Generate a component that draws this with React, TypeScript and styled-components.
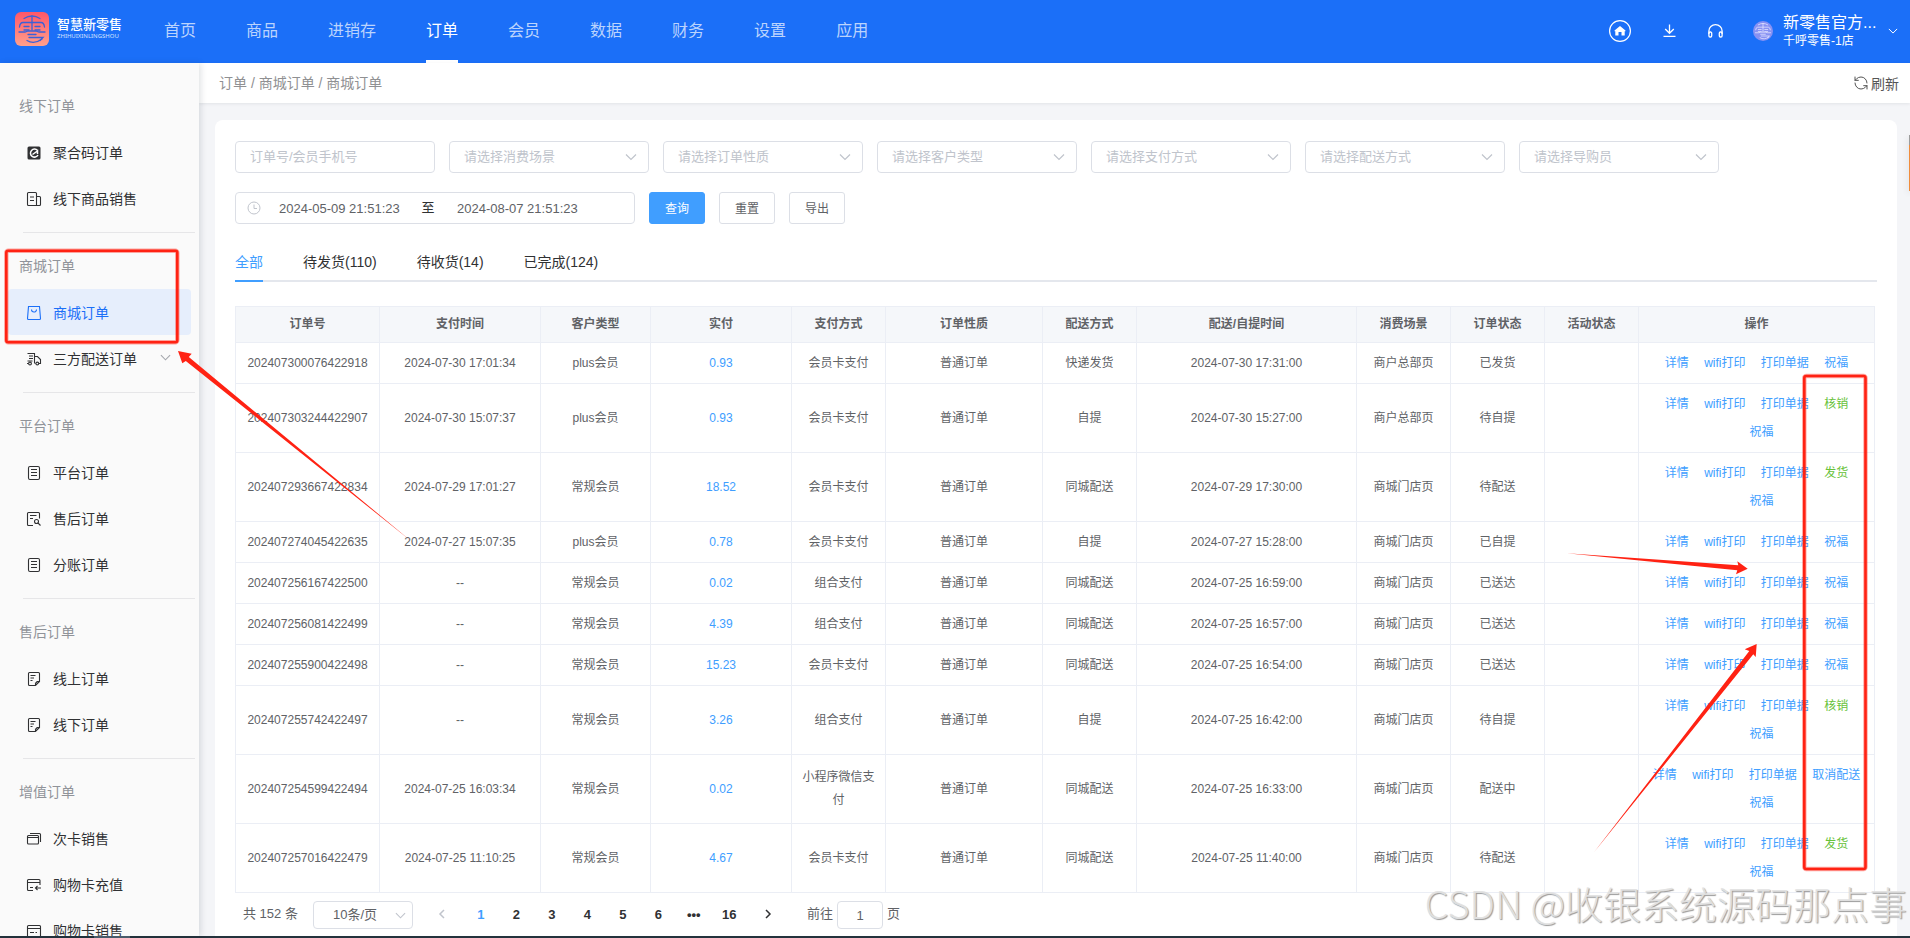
import React from 'react';
import styled, { createGlobalStyle, css } from 'styled-components';
import { RefreshCcw } from 'lucide-react';

const GlobalStyle = createGlobalStyle`
  *, *::before, *::after { box-sizing: border-box; }
  body {
    margin: 0;
    font-family: "Liberation Sans", "Noto Sans CJK SC", sans-serif;
    font-size: 14px;
    color: #303133;
  }
  button, input, select { font-family: inherit; margin: 0; }
  a { color: inherit; text-decoration: none; }
  ul { list-style: none; margin: 0; padding: 0; }
`;

/* ---------- shell ---------- */

const Shell = styled.div`
  position: relative;
  display: flex;
  flex-direction: column;
  height: 100vh;
  overflow: hidden;
  background: #f4f5f8;
`;

const Body = styled.div`
  display: flex;
  flex: 1;
  min-height: 0;
`;

const BottomStrip = styled.footer`
  flex: none;
  height: 2px;
  background: linear-gradient(90deg, #24333d 94px, #4d5f6e 94px 130px, #24333d 130px);
`;

/* ---------- header ---------- */

const Header = styled.header`
  flex: none;
  display: flex;
  align-items: center;
  height: 63px;
  padding: 0 12px 0 15px;
  background: #1b6ff8;
  color: #fff;
`;

const Brand = styled.a`
  display: flex;
  align-items: center;
  gap: 8px;
  width: 149px;
  margin-bottom: 5px;
`;

const BrandText = styled.div`
  display: flex;
  flex-direction: column;
`;

const BrandName = styled.span`
  font-size: 13px;
  font-weight: 500;
  line-height: 14px;
`;

const BrandSub = styled.span`
  font-family: "Noto Sans", sans-serif;
  font-size: 6px;
  line-height: 8px;
  color: #d3e2fe;
`;

const TopNav = styled.nav`
  display: flex;
  align-self: stretch;
  gap: 50px;
  flex: 1;
`;

const TopLink = styled.a<{ $active?: boolean }>`
  padding-top: 1px;
  border-bottom: 3px solid ${(p) => (p.$active ? '#fff' : 'transparent')};
  font-size: 16px;
  line-height: 59px;
  color: ${(p) => (p.$active ? '#fff' : '#bbd4fd')};
`;

const Tools = styled.div`
  display: flex;
  align-items: center;
  padding-bottom: 2px;
`;

const IconButton = styled.button<{ $gap?: number }>`
  display: flex;
  padding: 0;
  margin-right: ${(p) => p.$gap ?? 0}px;
  border: 0;
  background: none;
  color: #fff;
`;

const Account = styled.div`
  width: 100px;
  margin: 0 5px 0 10px;
  white-space: nowrap;
`;

const AccountName = styled.div`
  font-size: 16px;
  line-height: 20px;
`;

const AccountShop = styled.div`
  font-size: 12px;
  line-height: 16px;
`;

/* ---------- sidebar ---------- */

const SideWrap = styled.div`
  position: relative;
  z-index: 2;
  display: flex;
  flex: none;
  box-shadow: 2px 0 6px rgba(0, 21, 41, 0.12);
`;

const Sidebar = styled.aside`
  flex: none;
  width: 199px;
  padding-top: 20px;
  overflow: hidden;
  background: #fafafa;
`;

const Group = styled.section`
  & + & {
    padding-top: 11px;
  }
  & + &::before {
    content: '';
    display: block;
    height: 1px;
    margin: 0 4px 10px 23px;
    background: #e6e6e8;
  }
`;

const GroupTitle = styled.h2`
  margin: 0;
  padding-left: 19px;
  font-size: 14px;
  font-weight: 400;
  line-height: 46px;
  color: #909399;
`;

const SideLink = styled.a<{ $active?: boolean }>`
  display: flex;
  align-items: center;
  height: 46px;
  margin: 0 8px;
  padding: 0 20px 0 18px;
  border-radius: 4px;
  font-size: 14px;
  color: ${(p) => (p.$active ? '#1b6ff8' : '#303133')};
  background: ${(p) => (p.$active ? '#e6eefc' : 'transparent')};
`;

const SideGlyph = styled.svg`
  flex: none;
  margin-top: 2px;
`;

const SideLabel = styled.span`
  flex: 1;
  margin-left: 11px;
  white-space: nowrap;
`;

const SideChevron = styled.span`
  display: flex;
  margin-bottom: 2px;
  color: #a4a7ad;
`;

/* ---------- main ---------- */

const Main = styled.main`
  display: flex;
  flex-direction: column;
  flex: 1;
  min-width: 0;
`;

const CrumbBar = styled.div`
  flex: none;
  display: flex;
  align-items: center;
  justify-content: space-between;
  height: 40px;
  padding: 0 11px 0 20px;
  background: #fff;
  box-shadow: 0 1px 3px rgba(0, 21, 41, 0.08);
  color: #8f9092;
`;

const Crumbs = styled.nav`
  padding-bottom: 2px;
`;

const RefreshButton = styled.button`
  display: flex;
  align-items: center;
  gap: 2px;
  padding: 0;
  border: 0;
  background: none;
  font-size: 14px;
  color: #555;
`;

const Card = styled.section`
  flex: 1;
  min-height: 0;
  margin: 17px 13px 0 16px;
  padding: 21px 20px 0;
  border-radius: 8px 8px 0 0;
  background: #fff;
  overflow: hidden;
`;

const FilterRow = styled.div`
  display: flex;
  gap: 14px;
  margin-bottom: 19px;
`;

const fieldBox = css`
  border: 1px solid #dcdfe6;
  border-radius: 4px;
  background: #fff;
`;

const TextField = styled.input`
  ${fieldBox}
  width: 200px;
  height: 32px;
  padding: 0 14px 2px;
  font-size: 13px;
  color: #606266;
  &::placeholder { color: #c0c4cc; opacity: 1; }
`;

const SelectBox = styled.div<{ $small?: boolean }>`
  ${fieldBox}
  position: relative;
  display: flex;
  align-items: center;
  width: ${(p) => (p.$small ? 100 : 200)}px;
  height: ${(p) => (p.$small ? 28 : 32)}px;
  color: #c0c4cc;
  svg {
    position: absolute;
    right: ${(p) => (p.$small ? 6 : 11)}px;
    pointer-events: none;
  }
`;

const NativeSelect = styled.select<{ $small?: boolean }>`
  appearance: none;
  width: 100%;
  height: 100%;
  padding: ${(p) => (p.$small ? '0 19px 2px' : '0 30px 2px 14px')};
  border: 0;
  background: none;
  font-size: 13px;
  color: ${(p) => (p.$small ? '#606266' : '#c0c4cc')};
`;

const DateRange = styled.div`
  ${fieldBox}
  display: flex;
  align-items: center;
  width: 400px;
  height: 32px;
  padding-left: 11px;
  font-size: 13px;
`;

const DateInput = styled.input`
  width: 156px;
  padding: 0 0 0 18px;
  border: 0;
  background: none;
  font-size: 13px;
  color: #606266;
`;

const DateSeparator = styled.span`
  width: 22px;
  text-align: center;
  line-height: 24px;
`;

const Button = styled.button<{ $primary?: boolean }>`
  height: 32px;
  padding: 0 15px 2px;
  border: 1px solid ${(p) => (p.$primary ? '#409eff' : '#dcdfe6')};
  border-radius: 3px;
  background: ${(p) => (p.$primary ? '#409eff' : '#fff')};
  color: ${(p) => (p.$primary ? '#fff' : '#606266')};
  font-size: 12px;
`;

const Tabs = styled.div`
  display: flex;
  gap: 40px;
  margin: 20px 0 24px;
  height: 38px;
  border-bottom: 2px solid #e4e7ed;
`;

const Tab = styled.button<{ $active?: boolean }>`
  height: 38px;
  padding: 0;
  border: 0;
  border-bottom: 2px solid ${(p) => (p.$active ? '#409eff' : 'transparent')};
  background: none;
  font-size: 14px;
  line-height: 36px;
  color: ${(p) => (p.$active ? '#409eff' : '#303133')};
`;

const TableFrame = styled.div`
  padding-right: 2px;
`;

const Table = styled.table`
  width: 100%;
  table-layout: fixed;
  border-collapse: separate;
  border-spacing: 0;
  border-top: 1px solid #ebeef5;
  border-left: 1px solid #ebeef5;
  font-size: 12px;
  line-height: 23px;
  color: #606266;
  text-align: center;
`;

const Th = styled.th`
  padding: 6px 10px;
  border-right: 1px solid #ebeef5;
  border-bottom: 1px solid #ebeef5;
  background: #f5f7fa;
`;

const Td = styled.td<{ $tone?: 'amount' }>`
  padding: 6px 10px;
  border-right: 1px solid #ebeef5;
  border-bottom: 1px solid #ebeef5;
  color: ${(p) => (p.$tone ? '#409eff' : 'inherit')};
`;

const Actions = styled.div`
  line-height: 28px;
`;

const Action = styled.button<{ $tone?: 'green' }>`
  padding: 0;
  border: 1px solid transparent;
  background: none;
  font-size: 12px;
  line-height: 26px;
  color: ${(p) => (p.$tone ? '#67c23a' : '#409eff')};
  & + & { margin-left: 10px; }
`;

const Pagination = styled.div`
  display: flex;
  align-items: center;
  height: 28px;
  margin-top: 8px;
  padding-left: 8px;
  font-size: 13px;
  line-height: 26px;
  color: #606266;
`;

const PageText = styled.span`
  padding-bottom: 2px;
`;

const Total = styled(PageText)`
  width: 70px;
`;

const PageArrow = styled.button<{ $dim?: boolean }>`
  display: flex;
  align-items: center;
  justify-content: center;
  width: 38px;
  height: 28px;
  padding: 0 0 2px;
  border: 0;
  background: none;
  color: ${(p) => (p.$dim ? '#c0c4cc' : '#303133')};
`;

const PrevSlot = styled.div`
  margin-left: 10px;
`;

const Pager = styled.ul`
  display: flex;
  width: 284px;
  margin: 0 2px;
  li { flex: 1; }
`;

const PageNumber = styled.button<{ $active?: boolean }>`
  width: 100%;
  height: 28px;
  padding: 0 0 2px;
  border: 0;
  background: none;
  font-size: 13px;
  font-weight: 700;
  color: ${(p) => (p.$active ? '#409eff' : '#303133')};
`;

const Jump = styled.label`
  display: flex;
  align-items: center;
  gap: 4px;
  margin-left: 20px;
`;

const JumpInput = styled.input`
  ${fieldBox}
  width: 46px;
  height: 28px;
  padding: 0;
  text-align: center;
  font-size: 13px;
  color: #606266;
`;

/* ---------- overlays ---------- */

const Markup = styled.svg`
  position: absolute;
  inset: 0;
  z-index: 5;
  width: 100%;
  height: 100%;
  pointer-events: none;
`;

const Watermark = styled.div`
  position: absolute;
  right: 3px;
  bottom: 8px;
  z-index: 6;
  font-family: "Noto Sans CJK SC", sans-serif;
  font-size: 38px;
  font-weight: 300;
  line-height: 54px;
  white-space: nowrap;
  color: rgba(226, 226, 226, 0.95);
  text-shadow: 1px 1px 1px #9a9a9a;
  pointer-events: none;
`;

const FloatingTab = styled.div`
  position: absolute;
  top: 135px;
  right: 0;
  z-index: 4;
  width: 1px;
  height: 56px;
  border-top: 10px solid #9c9c9c;
  background: #f08c3c;
  box-shadow: 0 2px 6px rgba(0, 0, 0, 0.3);
`;

/* ---------- icons ---------- */

const Glyph = ({ color }: { color: string }) => (
  <g fill="none" stroke={color} strokeWidth="1.3" strokeLinecap="round">
    <path d="M9 6.500Q17 1.500 25 6.500" />
    <path d="M17 4v14" />
    <path d="M4.500 15Q5 10.500 8 10.500H26Q29 10.500 29.500 15" />
    <path d="M9 14.500h5M20 14.500h5M9 18h5M20 18h5" />
    <path d="M4 20h6l3-1h8l3 1h6" />
    <path d="M13 22.500h8" />
    <path d="M14 25.500h14l-3 3" />
    <path d="M12 28.500Q19 33 27 27" />
  </g>
);

const LogoIcon = () => (
  <svg width="34" height="34" viewBox="0 0 34 34" aria-hidden="true">
    <defs>
      <linearGradient id="logo" x1="0" y1="0" x2="0" y2="1">
        <stop offset="0" stopColor="#ff5768" />
        <stop offset="1" stopColor="#ffa08c" />
      </linearGradient>
    </defs>
    <rect width="34" height="34" rx="6" fill="url(#logo)" />
    <Glyph color="#3b61d8" />
  </svg>
);

const Avatar = () => (
  <svg width="20" height="20" viewBox="0 0 34 34" aria-hidden="true">
    <circle cx="17" cy="17" r="17" fill="#8791f3" />
    <Glyph color="#e6e6ff" />
  </svg>
);

const Chevron = ({ size = 12 }: { size?: number }) => (
  <svg width={size} height={size} viewBox="0 0 12 12" fill="none" stroke="currentColor" strokeWidth="1.200" aria-hidden="true">
    <path d="M1 3.500l5 5 5-5" />
  </svg>
);

const HomeIcon = () => (
  <svg width="22" height="22" viewBox="0 0 22 22" fill="none" aria-hidden="true">
    <circle cx="11" cy="11" r="10.400" stroke="#fff" strokeWidth="1.200" />
    <path d="M11 6l5.500 4.500v.8h-.8V15.500h-3.200v-3.500h-3v3.500H6.300v-4.200h-.8v-.8z" fill="#fff" />
  </svg>
);

const DownloadIcon = () => (
  <svg width="13" height="13" viewBox="0 0 13 13" fill="none" stroke="#fff" strokeWidth="1.300" aria-hidden="true">
    <path d="M6.500 0.500v8.500M2.200 5l4.300 4.300L10.800 5M0.500 12.300h12" />
  </svg>
);

const HeadsetIcon = () => (
  <svg width="15" height="14" viewBox="0 0 15 14" fill="none" stroke="#fff" strokeWidth="1.300" aria-hidden="true">
    <path d="M0.900 10V7a6.600 6.300 0 0 1 13.200 0v3" />
    <rect x="0.900" y="8" width="2.800" height="5" rx="1.200" />
    <rect x="11.300" y="8" width="2.800" height="5" rx="1.200" />
  </svg>
);

const ClockIcon = () => (
  <svg width="14" height="14" viewBox="0 0 14 14" fill="none" stroke="#c0c4cc" aria-hidden="true">
    <circle cx="7" cy="7" r="6" />
    <path d="M7 3.500v4h3" />
  </svg>
);

type IconName = 'code' | 'sale' | 'bag' | 'truck' | 'list' | 'search' | 'note' | 'cards' | 'topup' | 'card';

const iconPaths: Record<IconName, React.ReactNode> = {
  code: (
    <>
      <rect x="1.500" y="1.500" width="13" height="13" rx="1.500" fill="#303133" stroke="none" />
      <path d="M11.500 5.500a4 4 0 1 0 .5 4.500M6.500 9.500l5-3.500v3" stroke="#fff" strokeWidth="1.500" />
    </>
  ),
  sale: <path d="M2.500 1.500h7a1 1 0 0 1 1 1v12h-8a1 1 0 0 1-1-1v-11a1 1 0 0 1 1-1zM10.500 5.500h3a1 1 0 0 1 1 1v7a1 1 0 0 1-1 1h-3M4 6h4M4 9.500h4" />,
  bag: (
    <>
      <path d="M2.500 1.500h11l1 12a1 1 0 0 1-1 1h-11a1 1 0 0 1-1-1z" />
      <path d="M5.500 4.500a2.500 2.500 0 0 0 5 0" />
    </>
  ),
  truck: (
    <>
      <path d="M1.500 2.500h7v9.500M3 5h4M3 7.500h4M1.500 10h5M8.500 5.500h3l3 3v4h-1.500M8.500 12.500h1" />
      <circle cx="4" cy="12.500" r="1.400" />
      <circle cx="11.300" cy="12.500" r="1.400" />
      <path d="M1 12.500h1.500" />
    </>
  ),
  list: (
    <>
      <rect x="2.500" y="1.500" width="11" height="13" rx="1.500" />
      <path d="M5 4.500h6M5 7.500h6M5 10.500h6" />
    </>
  ),
  search: (
    <>
      <path d="M13.500 7.500v-5a1 1 0 0 0-1-1h-10a1 1 0 0 0-1 1v11a1 1 0 0 0 1 1H7M4 4.500h6.500M4 7.500h3" />
      <circle cx="10.500" cy="10.500" r="2" />
      <path d="M12 12l2.500 2.500" />
    </>
  ),
  note: (
    <>
      <path d="M3.500 1.500h9a1 1 0 0 1 1 1v8l-4 4h-6a1 1 0 0 1-1-1v-11a1 1 0 0 1 1-1zM13.500 10.500h-2.500a1.500 1.500 0 0 1-1.500 1.500v2.500" />
      <path d="M4.500 4.500h5M4.500 7h3.500M4.500 9.500h2" />
    </>
  ),
  cards: (
    <>
      <rect x="1.500" y="4.500" width="11" height="8.500" rx="1" />
      <path d="M1.500 6.500h11M4 2.500h9.500a1 1 0 0 1 1 1V11" />
    </>
  ),
  topup: (
    <>
      <path d="M14 8V3.500a1 1 0 0 0-1-1H2.500a1 1 0 0 0-1 1v9a1 1 0 0 0 1 1H7M1.500 5.500h12.500M4 10.500h3" />
      <path d="M15 11H9.500M11.500 9l-2 2 2 2" />
    </>
  ),
  card: (
    <>
      <rect x="1.500" y="2.500" width="13" height="11.500" rx="1" />
      <path d="M1.500 5.500h13M4 9.500h4M9.500 9.500h1.500" />
    </>
  ),
};

const SideIcon = ({ name }: { name: IconName }) => (
  <SideGlyph width="16" height="16" viewBox="0 0 16 16" fill="none" stroke="currentColor" strokeWidth="1.100" aria-hidden="true">
    {iconPaths[name]}
  </SideGlyph>
);

/* ---------- data ---------- */

const topLinks = ['首页', '商品', '进销存', '订单', '会员', '数据', '财务', '设置', '应用'];

const sideGroups: { title: string; items: [IconName, string][] }[] = [
  { title: '线下订单', items: [['code', '聚合码订单'], ['sale', '线下商品销售']] },
  { title: '商城订单', items: [['bag', '商城订单'], ['truck', '三方配送订单']] },
  { title: '平台订单', items: [['list', '平台订单'], ['search', '售后订单'], ['list', '分账订单']] },
  { title: '售后订单', items: [['note', '线上订单'], ['note', '线下订单']] },
  { title: '增值订单', items: [['cards', '次卡销售'], ['topup', '购物卡充值'], ['card', '购物卡销售']] },
];

const filters = ['请选择消费场景', '请选择订单性质', '请选择客户类型', '请选择支付方式', '请选择配送方式', '请选择导购员'];

const tabs = ['全部', '待发货(110)', '待收货(14)', '已完成(124)'];

const columns: [string, number][] = [
  ['订单号', 144], ['支付时间', 161], ['客户类型', 110], ['实付', 141], ['支付方式', 94], ['订单性质', 157],
  ['配送方式', 94], ['配送/自提时间', 220], ['消费场景', 94], ['订单状态', 94], ['活动状态', 94], ['操作', 236],
];

const HQ = '商户总部页';
const SHOP = '商城门店页';

// order no, paid at, customer, amount, payment, delivery, delivery time, scene, status, extra action
const orders: string[][] = [
  ['202407300076422918', '2024-07-30 17:01:34', 'plus会员', '0.93', '会员卡支付', '快递发货', '2024-07-30 17:31:00', HQ, '已发货', ''],
  ['202407303244422907', '2024-07-30 15:07:37', 'plus会员', '0.93', '会员卡支付', '自提', '2024-07-30 15:27:00', HQ, '待自提', '核销'],
  ['202407293667422834', '2024-07-29 17:01:27', '常规会员', '18.52', '会员卡支付', '同城配送', '2024-07-29 17:30:00', SHOP, '待配送', '发货'],
  ['202407274045422635', '2024-07-27 15:07:35', 'plus会员', '0.78', '会员卡支付', '自提', '2024-07-27 15:28:00', SHOP, '已自提', ''],
  ['202407256167422500', '--', '常规会员', '0.02', '组合支付', '同城配送', '2024-07-25 16:59:00', SHOP, '已送达', ''],
  ['202407256081422499', '--', '常规会员', '4.39', '组合支付', '同城配送', '2024-07-25 16:57:00', SHOP, '已送达', ''],
  ['202407255900422498', '--', '常规会员', '15.23', '会员卡支付', '同城配送', '2024-07-25 16:54:00', SHOP, '已送达', ''],
  ['202407255742422497', '--', '常规会员', '3.26', '组合支付', '自提', '2024-07-25 16:42:00', SHOP, '待自提', '核销'],
  ['202407254599422494', '2024-07-25 16:03:34', '常规会员', '0.02', '小程序微信支付', '同城配送', '2024-07-25 16:33:00', SHOP, '配送中', '取消配送'],
  ['202407257016422479', '2024-07-25 11:10:25', '常规会员', '4.67', '会员卡支付', '同城配送', '2024-07-25 11:40:00', SHOP, '待配送', '发货'],
];

const pages = ['1', '2', '3', '4', '5', '6', '•••', '16'];

/* ---------- parts ---------- */

const OrderRow = ({ order }: { order: string[] }) => {
  const [no, paidAt, customer, amount, payment, delivery, deliverAt, scene, status, extra] = order;
  const actions = ['详情', 'wifi打印', '打印单据', ...(extra ? [extra] : []), '祝福'];
  return (
    <tr>
      <Td>{no}</Td>
      <Td>{paidAt}</Td>
      <Td>{customer}</Td>
      <Td $tone="amount">{amount}</Td>
      <Td>{payment}</Td>
      <Td>普通订单</Td>
      <Td>{delivery}</Td>
      <Td>{deliverAt}</Td>
      <Td>{scene}</Td>
      <Td>{status}</Td>
      <Td />
      <Td>
        <Actions>
          {actions.map((label) => (
            <React.Fragment key={label}>
              <Action type="button" $tone={label === '核销' || label === '发货' ? 'green' : undefined}>
                {label}
              </Action>{' '}
            </React.Fragment>
          ))}
        </Actions>
      </Td>
    </tr>
  );
};

const Annotations = () => (
  <Markup aria-hidden="true">
    <g fill="none" stroke="#ff2213" strokeWidth="2.600">
      <rect x="6.300" y="250.800" width="171" height="91.500" rx="2" />
      <rect x="1804.300" y="376" width="61.200" height="493" rx="2" />
    </g>
    <g fill="none" stroke="#ff2213" strokeOpacity="0.400" strokeWidth="4.400">
      <rect x="6.300" y="250.800" width="171" height="91.500" rx="2" />
      <rect x="1804.300" y="376" width="61.200" height="493" rx="2" />
    </g>
    <g fill="#ff2213">
      <path d="M178 351L191.700 353.700 188.800 357 411 541 185.800 361 182.300 363.300z" />
      <path d="M1747.700 568.700L1737.300 561.300 1738.300 565.300 1566.700 553.300 1737.300 570.300 1736 574.300z" />
      <path d="M1756.700 644L1744.700 649.300 1749.300 651 1594 852.300 1753.300 654.300 1755.700 657z" />
    </g>
  </Markup>
);

export default function App() {
  return (
    <Shell>
      <GlobalStyle />
      <Header>
        <Brand href="#">
          <LogoIcon />
          <BrandText>
            <BrandName>智慧新零售</BrandName>
            <BrandSub>ZHIHUIXINLINGSHOU</BrandSub>
          </BrandText>
        </Brand>
        <TopNav>
          {topLinks.map((label) => (
            <TopLink key={label} href="#" $active={label === '订单'}>{label}</TopLink>
          ))}
        </TopNav>
        <Tools>
          <IconButton type="button" aria-label="主页" $gap={32}><HomeIcon /></IconButton>
          <IconButton type="button" aria-label="下载" $gap={32}><DownloadIcon /></IconButton>
          <IconButton type="button" aria-label="客服" $gap={30}><HeadsetIcon /></IconButton>
          <Avatar />
          <Account>
            <AccountName>新零售官方...</AccountName>
            <AccountShop>千呼零售-1店</AccountShop>
          </Account>
          <IconButton type="button" aria-label="账号菜单"><Chevron size={10} /></IconButton>
        </Tools>
      </Header>

      <Body>
        <SideWrap>
          <Sidebar>
            {sideGroups.map((group) => (
              <Group key={group.title}>
                <GroupTitle>{group.title}</GroupTitle>
                {group.items.map(([icon, label]) => (
                  <SideLink key={label} href="#" $active={icon === 'bag'}>
                    <SideIcon name={icon} />
                    <SideLabel>{label}</SideLabel>
                    {icon === 'truck' && <SideChevron><Chevron size={11} /></SideChevron>}
                  </SideLink>
                ))}
              </Group>
            ))}
          </Sidebar>
        </SideWrap>

        <Main>
          <CrumbBar>
            <Crumbs>订单 / 商城订单 / 商城订单</Crumbs>
            <RefreshButton type="button"><RefreshCcw size={16} strokeWidth={1.5} />刷新</RefreshButton>
          </CrumbBar>

          <Card>
            <FilterRow>
              <TextField placeholder="订单号/会员手机号" aria-label="订单号/会员手机号" />
              {filters.map((label) => (
                <SelectBox key={label}>
                  <NativeSelect aria-label={label}><option>{label}</option></NativeSelect>
                  <Chevron />
                </SelectBox>
              ))}
            </FilterRow>
            <FilterRow>
              <DateRange>
                <ClockIcon />
                <DateInput defaultValue="2024-05-09 21:51:23" aria-label="开始时间" />
                <DateSeparator>至</DateSeparator>
                <DateInput defaultValue="2024-08-07 21:51:23" aria-label="结束时间" />
              </DateRange>
              <Button type="button" $primary>查询</Button>
              <Button type="button">重置</Button>
              <Button type="button">导出</Button>
            </FilterRow>

            <Tabs role="tablist">
              {tabs.map((label, i) => (
                <Tab key={label} type="button" role="tab" aria-selected={i === 0} $active={i === 0}>{label}</Tab>
              ))}
            </Tabs>

            <TableFrame>
              <Table>
                <colgroup>
                  {columns.map(([label, width]) => <col key={label} width={width} />)}
                </colgroup>
                <thead>
                  <tr>{columns.map(([label]) => <Th key={label}>{label}</Th>)}</tr>
                </thead>
                <tbody>
                  {orders.map((order) => <OrderRow key={order[0]} order={order} />)}
                </tbody>
              </Table>
            </TableFrame>

            <Pagination>
              <Total>共 152 条</Total>
              <SelectBox $small>
                <NativeSelect $small aria-label="每页条数"><option>10条/页</option></NativeSelect>
                <Chevron size={11} />
              </SelectBox>
              <PrevSlot>
                <PageArrow type="button" $dim aria-label="上一页">
                  <svg width="10" height="10" viewBox="0 0 10 10" fill="none" stroke="currentColor" strokeWidth="1.500"><path d="M7 1L3 5l4 4" /></svg>
                </PageArrow>
              </PrevSlot>
              <Pager>
                {pages.map((p) => (
                  <li key={p}><PageNumber type="button" $active={p === '1'}>{p}</PageNumber></li>
                ))}
              </Pager>
              <PageArrow type="button" aria-label="下一页">
                <svg width="10" height="10" viewBox="0 0 10 10" fill="none" stroke="currentColor" strokeWidth="1.500"><path d="M3 1l4 4-4 4" /></svg>
              </PageArrow>
              <Jump>
                <PageText>前往</PageText>
                <JumpInput defaultValue="1" />
                <PageText>页</PageText>
              </Jump>
            </Pagination>
          </Card>
        </Main>
      </Body>

      <BottomStrip />
      <FloatingTab />
      <Annotations />
      <Watermark>CSDN @收银系统源码那点事</Watermark>
    </Shell>
  );
}
